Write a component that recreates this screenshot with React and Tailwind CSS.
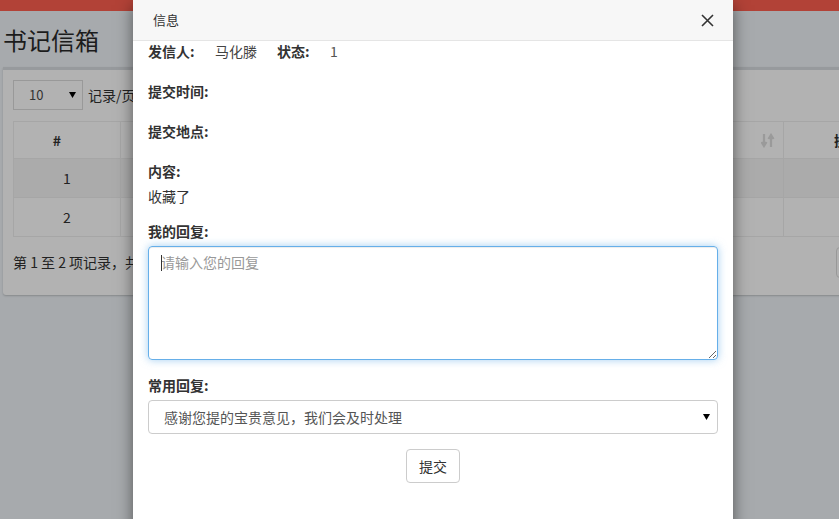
import React from "react";

function Caret({ color = "#000" }) {
  return (
    <svg width="7" height="6" viewBox="0 0 7 6">
      <path d="M0 0 H7 L3.5 6 Z" fill={color} />
    </svg>
  );
}

export default function App() {
  return (
    <div className="relative w-[839px] h-[519px] overflow-hidden bg-[#a7aaad] font-['Noto_Sans_CJK_SC','Noto_Sans',sans-serif] text-[14px] text-[#1f1f1f]">
      {/* background page (dimmed) */}
      <div className="h-[11px] bg-[#b24237]" />
      <h1 className="ml-[3px] mt-[15px] text-[24px] leading-[28px] font-normal text-[#1c1c1c]">书记信箱</h1>
      <div className="mt-[13px] ml-[3px] w-[1100px] h-[228px] bg-[#b2b2b2] border-t-[3px] border-[#979a9d] rounded-b-[3px] shadow-[0_1px_2px_rgba(0,0,0,0.2)] px-[10px] pt-[10px]">
        <div className="flex items-center h-[30px]">
          <div className="w-[70px] h-[30px] border border-[#999] flex items-center justify-between pl-[15px] pr-[6px] text-[13px] text-[#333]">
            <span>10</span>
            <Caret />
          </div>
          <span className="ml-[5px] text-[14px] text-[#222]">记录/页</span>
        </div>
        <div className="mt-[11px] w-[920px] border border-[#a6a6a6] text-[14px] text-[#222]">
          <div className="flex h-[37px] border-b border-[#a6a6a6]">
            <div className="w-[107px] flex items-center justify-center pr-[20px] border-r border-[#a6a6a6] font-bold">#</div>
            <div className="w-[200px] border-r border-[#a6a6a6]" />
            <div className="w-[200px] border-r border-[#a6a6a6]" />
            <div className="w-[263px] border-r border-[#a6a6a6] flex items-center justify-end pr-[8px]">
              <svg width="14" height="15" viewBox="0 0 14 15">
                <path d="M3 1 V11 M0.5 9 L3 13 L5.5 9" stroke="#9a9a9a" strokeWidth="2.2" fill="none" />
                <path d="M10 14 V4 M7.5 6 L10 2 L12.5 6" stroke="#9a9a9a" strokeWidth="2.2" fill="none" />
              </svg>
            </div>
            <div className="flex-1 flex items-center pl-[50px] font-bold">操作</div>
          </div>
          <div className="flex h-[39px] border-b border-[#a6a6a6] bg-[#ababab]">
            <div className="w-[107px] flex items-center justify-center border-r border-[#a6a6a6]">1</div>
            <div className="w-[200px] border-r border-[#a6a6a6]" />
            <div className="w-[200px] border-r border-[#a6a6a6]" />
            <div className="w-[263px] border-r border-[#a6a6a6]" />
            <div className="flex-1" />
          </div>
          <div className="flex h-[38px]">
            <div className="w-[107px] flex items-center justify-center border-r border-[#a6a6a6]">2</div>
            <div className="w-[200px] border-r border-[#a6a6a6]" />
            <div className="w-[200px] border-r border-[#a6a6a6]" />
            <div className="w-[263px] border-r border-[#a6a6a6]" />
            <div className="flex-1" />
          </div>
        </div>
        <div className="flex items-center mt-[10px]">
          <div className="w-[823px] text-[14px] text-[#222]">第 1 至 2 项记录，共 2 项</div>
          <div className="w-[60px] h-[31px] border border-[#999] rounded-l-[4px]" />
        </div>
      </div>

      {/* modal */}
      <div className="absolute left-[133px] top-0 w-[600px] h-[540px] bg-white shadow-[0_5px_15px_rgba(0,0,0,0.5)]">
        <div className="h-[41px] bg-[#f7f7f7] border-b border-[#e5e5e5] flex items-center justify-between pl-[20px] pr-[19px]">
          <span className="text-[13px] text-[#333]">信息</span>
          <svg width="13" height="13" viewBox="0 0 13 13">
            <path d="M1 1 L12 12 M12 1 L1 12" stroke="#333" strokeWidth="1.6" />
          </svg>
        </div>
        <div className="px-[15px] text-[14px] leading-[20px] text-[#333]">
          <div className="flex h-[20px]">
            <span className="w-[67px] font-bold">发信人:</span>
            <span className="w-[62px] text-[#444]">马化滕</span>
            <span className="w-[53px] font-bold">状态:</span>
            <span className="text-[#555]">1</span>
          </div>
          <div className="mt-[20px] font-bold">提交时间:</div>
          <div className="mt-[20px] font-bold">提交地点:</div>
          <div className="mt-[20px] font-bold">内容:</div>
          <div className="mt-[5px]">收藏了</div>
          <div className="mt-[15px] font-bold">我的回复:</div>
          <div className="relative mt-[5px]">
            <textarea
              readOnly
              placeholder="请输入您的回复"
              className="block w-[570px] h-[114px] border border-[#66afe9] rounded-[4px] px-[12px] py-[5px] text-[14px] leading-[20px] text-[#555] placeholder:text-[#999] outline-none shadow-[inset_0_1px_1px_rgba(0,0,0,0.075),0_0_8px_rgba(102,175,233,0.6)]"
            />
            <span className="absolute left-[13px] top-[9px] w-[1px] h-[16px] bg-[#333]" />
          </div>
          <div className="mt-[15px] font-bold">常用回复:</div>
          <div className="mt-[5px] w-[570px] h-[34px] border border-[#ccc] rounded-[4px] flex items-center justify-between pl-[15px] pr-[7px] text-[#555]">
            <span>感谢您提的宝贵意见，我们会及时处理</span>
            <Caret />
          </div>
          <div className="mt-[15px] flex justify-center">
            <div className="w-[54px] h-[34px] border border-[#ccc] rounded-[4px] flex items-center justify-center text-[#333]">提交</div>
          </div>
        </div>
      </div>
    </div>
  );
}
